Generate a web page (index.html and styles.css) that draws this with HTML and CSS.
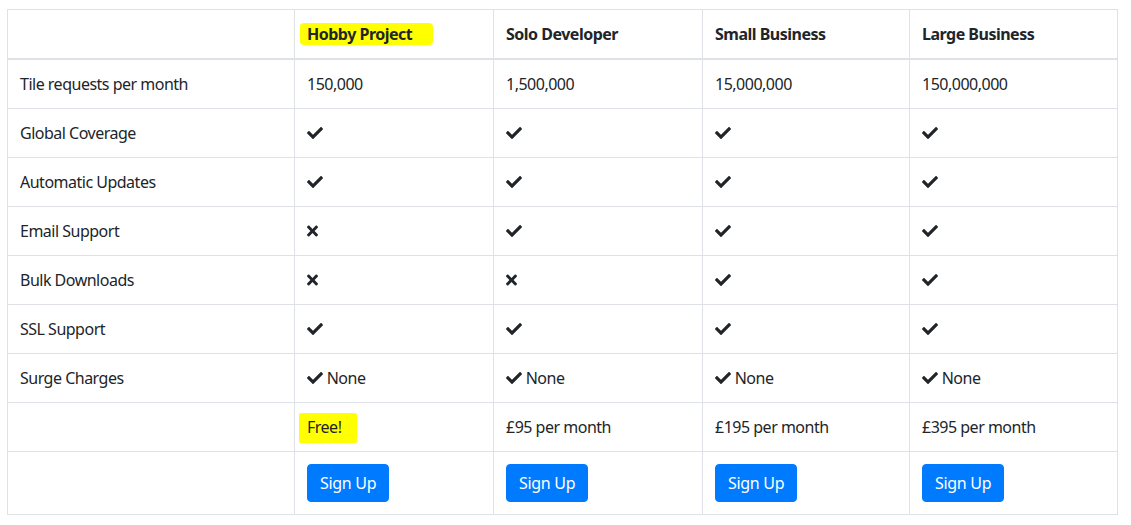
FILE: index.html
```html
<!DOCTYPE html>
<html lang="en">
<head>
<meta charset="utf-8">
<title>Pricing</title>
<link rel="stylesheet" href="styles.css">
</head>
<body>
<svg class="defs" aria-hidden="true">
  <symbol id="ok" viewBox="0 0 512 512"><path d="M173.898 439.404l-166.4-166.4c-9.997-9.997-9.997-26.206 0-36.204l36.203-36.204c9.997-9.998 26.207-9.998 36.204 0L192 312.69 432.095 72.596c9.997-9.997 26.207-9.997 36.204 0l36.203 36.204c9.997 9.997 9.997 26.206 0 36.204l-294.4 294.401c-9.998 9.997-26.207 9.997-36.204-.001z"/></symbol>
  <symbol id="no" viewBox="0 0 352 512"><path d="M242.72 256l100.07-100.07c12.28-12.28 12.28-32.19 0-44.48l-22.24-22.240c-12.28-12.28-32.19-12.28-44.48 0L176 189.28 75.93 89.21c-12.28-12.28-32.19-12.28-44.48 0L9.21 111.45c-12.28 12.28-12.28 32.19 0 44.48L109.28 256 9.21 356.07c-12.28 12.28-12.28 32.19 0 44.48l22.24 22.24c12.28 12.28 32.2 12.28 44.48 0L176 322.72l100.07 100.07c12.28 12.28 32.2 12.28 44.48 0l22.24-22.24c12.28-12.28 12.28-32.19 0-44.48L242.72 256z"/></symbol>
</svg>
<div class="wrap">
<table class="pricing">
  <colgroup>
    <col class="c0"><col class="c1"><col class="c2"><col class="c3"><col class="c4">
  </colgroup>
  <thead>
    <tr>
      <th></th>
      <th><span class="hl hl-head">Hobby Project</span></th>
      <th>Solo Developer</th>
      <th>Small Business</th>
      <th>Large Business</th>
    </tr>
  </thead>
  <tbody>
    <tr><td>Tile requests per month</td><td>150,000</td><td>1,500,000</td><td>15,000,000</td><td>150,000,000</td></tr>
    <tr><td>Global Coverage</td>
      <td><svg class="ic"><use href="#ok"/></svg></td><td><svg class="ic"><use href="#ok"/></svg></td><td><svg class="ic"><use href="#ok"/></svg></td><td><svg class="ic"><use href="#ok"/></svg></td></tr>
    <tr><td>Automatic Updates</td>
      <td><svg class="ic"><use href="#ok"/></svg></td><td><svg class="ic"><use href="#ok"/></svg></td><td><svg class="ic"><use href="#ok"/></svg></td><td><svg class="ic"><use href="#ok"/></svg></td></tr>
    <tr><td>Email Support</td>
      <td><svg class="ic ic-x"><use href="#no"/></svg></td><td><svg class="ic"><use href="#ok"/></svg></td><td><svg class="ic"><use href="#ok"/></svg></td><td><svg class="ic"><use href="#ok"/></svg></td></tr>
    <tr><td>Bulk Downloads</td>
      <td><svg class="ic ic-x"><use href="#no"/></svg></td><td><svg class="ic ic-x"><use href="#no"/></svg></td><td><svg class="ic"><use href="#ok"/></svg></td><td><svg class="ic"><use href="#ok"/></svg></td></tr>
    <tr><td>SSL Support</td>
      <td><svg class="ic"><use href="#ok"/></svg></td><td><svg class="ic"><use href="#ok"/></svg></td><td><svg class="ic"><use href="#ok"/></svg></td><td><svg class="ic"><use href="#ok"/></svg></td></tr>
    <tr><td>Surge Charges</td>
      <td><svg class="ic"><use href="#ok"/></svg> None</td><td><svg class="ic"><use href="#ok"/></svg> None</td><td><svg class="ic"><use href="#ok"/></svg> None</td><td><svg class="ic"><use href="#ok"/></svg> None</td></tr>
    <tr><td></td><td><span class="hl hl-free">Free!</span></td><td>£95 per month</td><td>£195 per month</td><td>£395 per month</td></tr>
    <tr><td></td>
      <td><button class="btn">Sign Up</button></td>
      <td><button class="btn">Sign Up</button></td>
      <td><button class="btn">Sign Up</button></td>
      <td><button class="btn">Sign Up</button></td></tr>
  </tbody>
</table>
</div>
</body>
</html>
```

FILE: styles.css
```css
html, body {
  margin: 0;
  padding: 0;
  background: #fff;
}
body {
  font-family: "Noto Sans", "Open Sans", sans-serif;
  font-size: 16px;
  line-height: 1.5;
  color: #212529;
}
.defs {
  position: absolute;
  width: 0;
  height: 0;
  overflow: hidden;
}
.wrap {
  padding: 9px 0 0 7px;
}
.pricing {
  width: 1110px;
  border-collapse: collapse;
  table-layout: fixed;
}
.c0 { width: 287px; }
.c1 { width: 199px; }
.c2 { width: 209px; }
.c3 { width: 207px; }
.c4 { width: 208px; }
.pricing th,
.pricing td {
  border: 1px solid #dee2e6;
  padding: 12px;
  text-align: left;
  vertical-align: top;
  letter-spacing: -0.5px;
}
.pricing th {
  font-weight: 700;
  border-bottom-width: 2px;
}
.ic {
  width: 16px;
  height: 16px;
  fill: #212529;
  vertical-align: -2px;
}
.ic-x {
  width: 11px;
}
.hl {
  background: #ffff00;
}
.hl-head {
  padding: 0 21px 0 7px;
  margin-left: -7px;
  border-radius: 4px;
}
.hl-free {
  padding: 3px 16px 5px 8px;
  margin-left: -8px;
  border-radius: 2px;
}
.btn {
  font-family: inherit;
  font-size: 16px;
  line-height: 1.5;
  letter-spacing: -0.3px;
  color: #fff;
  background: #007bff;
  border: 1px solid #007bff;
  border-radius: 4px;
  padding: 6px 12px;
  margin: 0;
  cursor: pointer;
}
```
